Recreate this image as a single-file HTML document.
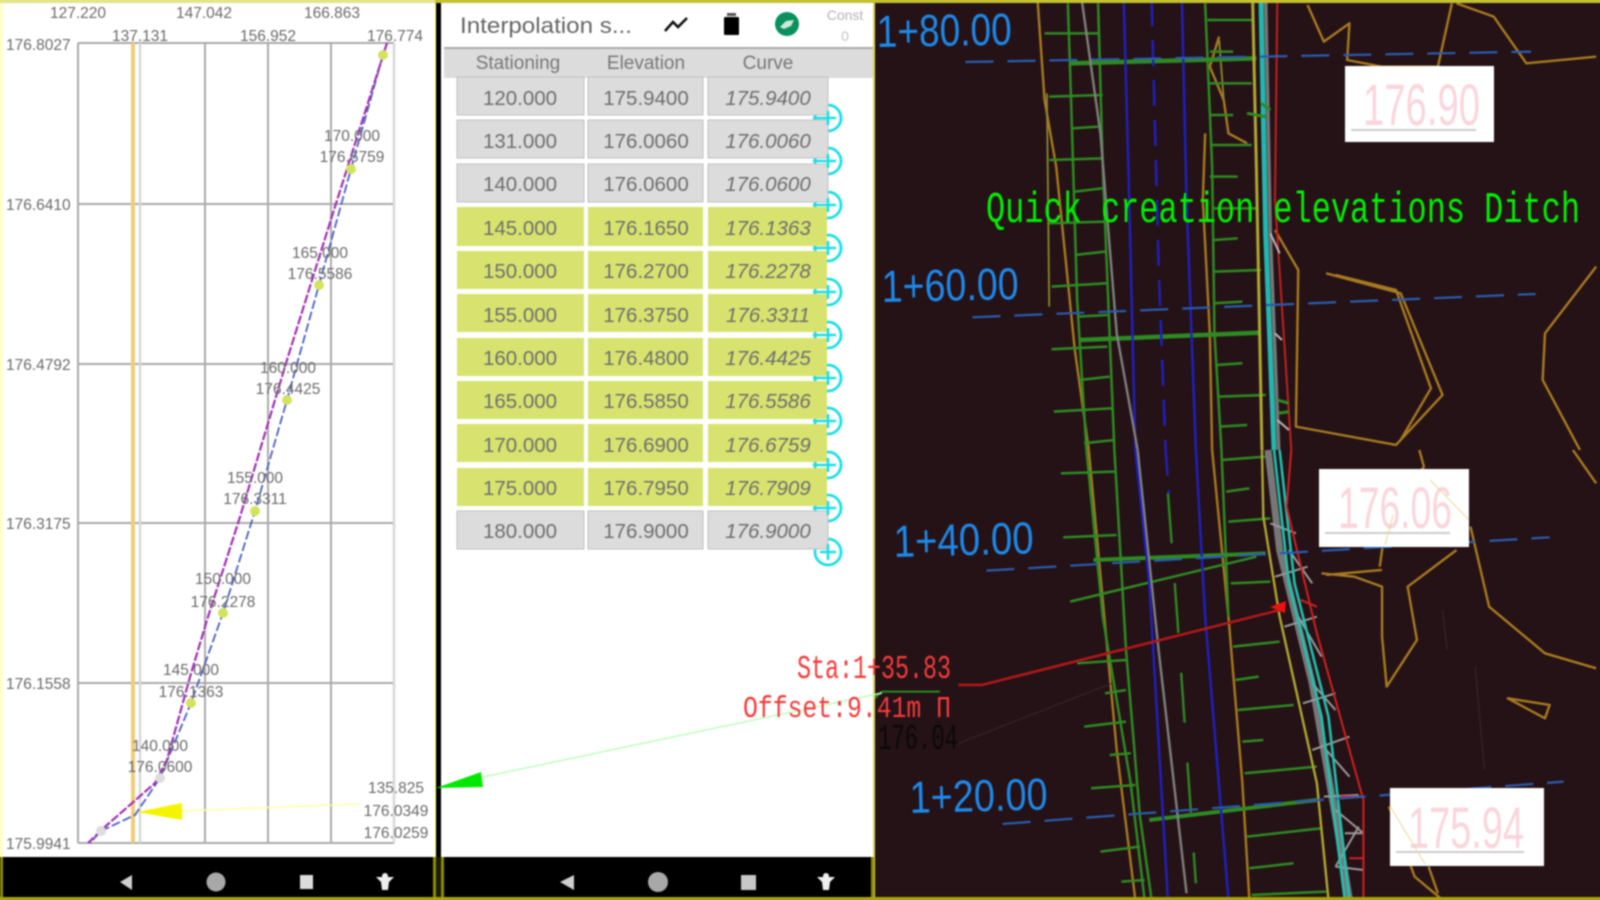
<!DOCTYPE html>
<html><head><meta charset="utf-8"><title>Interpolation</title>
<style>
html,body{margin:0;padding:0;background:#fff;width:1600px;height:900px;overflow:hidden}
svg{display:block}
text{font-family:"Liberation Sans",sans-serif}
.a text{font-size:15.5px;fill:#6a6a6a;text-anchor:middle}
.y text{font-size:15.5px;fill:#6a6a6a}
.h text{font-size:19px;fill:#777;text-anchor:middle}
.c text{font-size:20.5px;fill:#6e6e6e;text-anchor:middle}
.z *{vector-effect:non-scaling-stroke;fill:none;stroke-linejoin:round}
.st{font-size:45px;fill:#1e88e8}
.pk{font-size:58px;fill:#fad6dc}
.mono{font-family:"Liberation Mono",monospace}
</style></head><body>
<svg width="1600" height="900" viewBox="0 0 1600 900" xmlns="http://www.w3.org/2000/svg">
<g style="filter:blur(.9px)">
<rect x="-10" y="-10" width="1620" height="920" fill="#fff"/>
<!-- dark panel -->
<rect x="875" y="-10" width="735" height="920" fill="#241216"/>

<!-- CAD upper -->
<g class="z" transform="translate(870,0) scale(.4655,.3333)">
<path stroke="#a87a20" stroke-width="2.4" d="M360,0 L375,300 L400,500 L440,1050 L470,1350 M750,110 L730,200 L760,300 L770,400 L810,430 M720,400 L715,600 L730,1000 L735,1350 M940,15 L975,125 L1030,70 L1025,180 L1100,200 L1220,200 L1250,10 M1260,10 L1340,50 L1410,190 L1560,170 M870,690 L920,810 L915,1280 L1130,1335 L1230,1185 L1140,880 L980,820 M1000,825 L1130,870 L1205,1165 L1140,1320 M1560,800 L1450,1000 L1445,1140 L1525,1350"/>
<path stroke="#8a8a30" stroke-width="1.8" d="M380,280 L385,920 M750,120 L760,300"/>
<path stroke="#2e8a22" stroke-width="2.5" d="M425,10 L432,300 L445,900 L465,1350 M490,10 L500,500 L525,1350 M720,10 L735,500 L740,1000 L755,1350 M375,100 L490,100 M385,290 L500,285 M435,385 L490,380 M385,480 L500,475 M440,575 L500,565 M385,670 L505,665 M440,765 L505,755 M390,860 L510,850 M445,950 L510,945 M390,1048 L510,1040 M450,1140 L515,1130 M395,1235 L520,1225 M460,1330 L525,1320 M725,60 L820,60 M730,155 L780,155 M730,250 L820,250 M730,345 L780,345 M730,435 L820,435 M730,530 L790,530 M735,625 L830,625 M740,720 L790,715 M740,815 L840,810 M740,910 L800,905 M745,1095 L800,1090 M750,1190 L850,1185 M750,1280 L810,1275"/>
<path stroke="#2e8a22" stroke-width="4.5" d="M430,190 L830,175 M450,1020 L840,998"/>
<path stroke="#2020c0" stroke-width="2.4" d="M545,0 L555,500 L570,1350 M670,0 L680,600 L700,1350"/>
<path stroke="#2020c0" stroke-width="2.4" stroke-dasharray="26 14" d="M605,0 L620,800 L635,1350"/>
<path stroke="#808080" stroke-width="2.4" d="M455,0 L495,400 L530,1000 L575,1350"/>
<path stroke="#b0a830" stroke-width="3" d="M822,0 L830,500 L842,1350"/>
<path stroke="#777" stroke-width="3.5" d="M850,0 L860,700 L878,1350"/>
<path stroke="#20b8b0" stroke-width="5" d="M840,0 L850,700 L868,1350"/>
<path stroke="#c02020" stroke-width="2" d="M875,0 L870,600 L905,1350"/>
<path stroke="#2e8a22" stroke-width="3" d="M810,340 L850,350 M840,310 L860,330 M875,1200 L900,1210 M878,1240 L900,1235"/>
<path stroke="#b8b8b8" stroke-width="2" d="M860,700 L880,760 M870,1000 L885,1020 M875,1260 L900,1290"/>
<path stroke="#2a5cb0" stroke-width="2.2" stroke-dasharray="28 14" d="M205,186 L1420,155 M220,952 L1430,882"/>
</g>

<!-- CAD lower -->
<g class="z" transform="translate(870,450) scale(.4655,.3333)">
<path stroke="#a87a20" stroke-width="2.4" d="M470,0 L490,300 L510,600 L530,900 L570,1350 M735,0 L770,500 L800,1000 L815,1350 M970,370 L1040,380 L1100,410 L1100,560 L1110,710 L1175,570 L1155,410 L1260,300 M1100,360 L980,375 M1180,0 L1190,50 L1110,200 L1095,350 M1290,230 L1330,470 L1450,610 L1560,655 M1510,0 L1560,100 M1370,745 L1460,765 L1450,805 Z M1115,1070 L1170,1280 L1230,1350 M1200,1250 L1220,1330"/>
<path stroke="#2e8a22" stroke-width="2.5" d="M465,0 L500,500 L560,1000 L590,1350 M525,0 L550,600 L580,1100 L605,1350 M755,0 L770,500 M410,70 L525,65 M415,262 L530,255 M430,455 L830,320 M445,640 L550,630 M505,730 L550,720 M460,830 L550,815 M515,915 L560,910 M475,1015 L570,1005 M495,1205 L580,1190 M540,1295 L590,1290 M755,30 L850,20 M765,125 L815,115 M770,215 L860,205 M775,400 L860,395 M780,590 L880,575 M785,690 L835,680 M790,780 L910,765 M800,875 L845,870 M805,970 L960,950 M810,1160 L970,1135 M815,1255 L910,1240 M820,1335 L980,1325"/>
<path stroke="#2e8a22" stroke-width="4" d="M480,330 L850,310 M600,1110 L960,1050"/>
<path stroke="#2e8a22" stroke-width="2.4" stroke-dasharray="50 40" d="M640,130 L660,500 L680,900 L700,1300"/>
<path stroke="#2020c0" stroke-width="2.4" d="M570,0 L600,400 L640,1350 M700,0 L720,500 L770,1350"/>
<path stroke="#2020c0" stroke-width="2.4" stroke-dasharray="26 14" d="M635,0 L642,130"/>
<path stroke="#808080" stroke-width="2.4" d="M575,0 L620,600 L680,1330"/>
<path stroke="#777" stroke-width="7" d="M855,0 L880,300 L950,700 L1000,1100 L1030,1350"/>
<path stroke="#9a9a9a" stroke-width="2" d="M860,220 L915,250 M900,300 L950,400 M870,380 L940,350 M920,500 L970,620 M890,530 L960,500 M950,700 L1000,780 M930,760 L1000,730 M980,900 L1030,980 M950,900 L1030,860 M1000,1080 L1060,1150 M1000,1250 L1060,1260 M1020,1150 L1060,1150 M975,1040 L1050,1035 M1000,1250 L1050,1130"/>
<path stroke="#b0a830" stroke-width="2.4" d="M842,0 L845,200 L880,500 L960,1000 L985,1350"/>
<path stroke="#20c0b0" stroke-width="2.6" d="M868,0 L900,400 L970,800 L1020,1350 M880,0 L912,400 L985,800 L1030,1350"/>
<path stroke="#d02020" stroke-width="2" d="M905,0 L895,170 L960,550 L1060,1050 L1060,1350 M925,450 L960,470 M1010,1040 L1060,1040 M1030,1225 L1060,1225"/>
<path stroke="#b01818" stroke-width="2.6" d="M190,705 L240,705 L880,480"/>
<path stroke="#2a5cb0" stroke-width="2.2" stroke-dasharray="28 14" d="M250,362 L1460,262 M285,1122 L1490,995"/>
<path stroke="#2e8a22" stroke-width="2" d="M10,745 L25,725 L150,725"/>
<path stroke="#3a2a2c" stroke-width="1" d="M190,880 L520,700 M1230,480 L1240,600 M1300,650 L1320,960"/>
</g>
<polygon points="1270,607 1286,601 1285,613" fill="#ee1111"/>

<!-- white value boxes -->
<rect x="1345" y="66" width="149" height="76" fill="#fff"/>
<rect x="1319" y="469" width="150" height="78" fill="#fff"/>
<rect x="1390" y="788" width="154" height="78" fill="#fff"/>
<text class="pk" x="1363" y="125" textLength="117" lengthAdjust="spacingAndGlyphs">176.90</text>
<text class="pk" x="1338" y="528" textLength="114" lengthAdjust="spacingAndGlyphs">176.06</text>
<text class="pk" x="1408" y="848" textLength="116" lengthAdjust="spacingAndGlyphs">175.94</text>
<path d="M1351,130H1476M1325,533H1450M1396,852H1524" stroke="#cccccc" stroke-width="2"/>
<path d="M1393,515L1385,545M1430,480L1469,520M1390,806L1425,864" stroke="#e8d8a0" stroke-width="1" fill="none"/>

<!-- station labels -->
<text class="st" x="877" y="47" textLength="135" lengthAdjust="spacingAndGlyphs" transform="rotate(-1 877 47)">1+80.00</text>
<text class="st" x="882" y="302" textLength="137" lengthAdjust="spacingAndGlyphs" transform="rotate(-1.2 882 302)">1+60.00</text>
<text class="st" x="894" y="557" textLength="140" lengthAdjust="spacingAndGlyphs" transform="rotate(-1.5 894 557)">1+40.00</text>
<text class="st" x="910" y="813" textLength="138" lengthAdjust="spacingAndGlyphs" transform="rotate(-1.5 910 813)">1+20.00</text>
<text class="mono" x="986" y="222" font-size="44" fill="#00ee00" textLength="594" lengthAdjust="spacingAndGlyphs">Quick creation elevations Ditch</text>

<!-- panel frames -->
<rect x="436" y="-10" width="5" height="920" fill="#000"/>
<rect x="-10" y="-10" width="13" height="920" fill="#ffffc8"/>
<rect x="434" y="-10" width="2" height="870" fill="#ffffb0"/>
<rect x="873" y="0" width="2" height="900" fill="#d8d860"/>
<rect x="-10" y="-10" width="1620" height="13" fill="#c4c230"/>
<rect x="-10" y="-10" width="445" height="13" fill="#e4e488"/>

<!-- left chart grid -->
<path d="M78,43V843M205,43V843M268,43V843M331,43V843M78,43H394M78,204H394M78,364H394M78,523H394M78,683H394M78,843H394" stroke="#aaa" stroke-width="2" fill="none"/>
<path d="M140,43V843M394,43V843" stroke="#d8d8d8" stroke-width="2.5" fill="none"/>
<rect x="131" y="43" width="4" height="800" fill="#f0cc78"/>
<polyline fill="none" stroke="#4a60c0" stroke-width="1.8" stroke-dasharray="9 3" points="386,46 383,55 351,169 319,285 287,400 255,511 223,613 191,703 160,778 135,815 101,831 90,843"/>
<polyline fill="none" stroke="#a030b0" stroke-width="2.2" stroke-dasharray="9 2" points="387,43 333,213 287,360 260,450 240,517 207,620 190,677 167,760 155,783 107,825 88,843"/>
<g fill="#d3e35c">
<circle cx="383" cy="55" r="5"/><circle cx="351" cy="169" r="5"/><circle cx="319" cy="285" r="5"/><circle cx="287" cy="400" r="5"/><circle cx="255" cy="511" r="5"/><circle cx="223" cy="613" r="5"/><circle cx="191" cy="703" r="5"/></g>
<circle cx="160" cy="778" r="5" fill="#ddd"/><circle cx="101" cy="831" r="5" fill="#ddd"/>
<line x1="182" y1="811" x2="360" y2="804" stroke="#ffffa8" stroke-width="1.5"/>
<polygon points="137,812 182,803 182,820" fill="#f4f400"/>

<g class="a">
<text x="78" y="18">127.220</text><text x="204" y="18">147.042</text><text x="332" y="18">166.863</text>
<text x="140" y="41">137.131</text><text x="268" y="41">156.952</text><text x="395" y="41">176.774</text>
<text x="352" y="141">170.000</text><text x="352" y="162">176.6759</text>
<text x="320" y="258">165.000</text><text x="320" y="279">176.5586</text>
<text x="288" y="373">160.000</text><text x="288" y="394">176.4425</text>
<text x="255" y="483">155.000</text><text x="255" y="504">176.3311</text>
<text x="223" y="584">150.000</text><text x="223" y="607">176.2278</text>
<text x="191" y="675">145.000</text><text x="191" y="697">176.1363</text>
<text x="160" y="751">140.000</text><text x="160" y="772">176.0600</text>
<text x="396" y="793">135.825</text><text x="396" y="816">176.0349</text><text x="396" y="838">176.0259</text>
</g>
<g class="y">
<text x="6" y="50">176.8027</text><text x="6" y="210">176.6410</text><text x="6" y="370">176.4792</text><text x="6" y="529">176.3175</text><text x="6" y="689">176.1558</text><text x="6" y="849">175.9941</text>
</g>

<!-- middle panel -->
<rect x="441" y="3" width="432" height="854" fill="#fff"/>
<text x="460" y="33" font-size="22" fill="#666" textLength="172" lengthAdjust="spacingAndGlyphs">Interpolation s...</text>
<path d="M665,31L673,22L678,27L687,18" stroke="#111" stroke-width="2.6" fill="none"/>
<rect x="724" y="17" width="15" height="18" rx="1" fill="#000"/><rect x="727" y="13" width="9" height="3" fill="#555"/>
<circle cx="787" cy="24" r="12" fill="#0a8f5f"/>
<path d="M780,27L786,21L794,20L791,26L784,29Z" fill="#cfe8dc"/>
<text x="845" y="20" font-size="14" fill="#b4b4b4" text-anchor="middle">Const</text>
<text x="845" y="41" font-size="14" fill="#c4c4c4" text-anchor="middle">0</text>

<rect x="444" y="48" width="429" height="30" fill="#dcdcdc"/>
<rect x="444" y="47" width="429" height="2" fill="#aaa"/>
<g class="h"><text x="518" y="69">Stationing</text><text x="646" y="69">Elevation</text><text x="768" y="69">Curve</text></g>

<!-- plus circles -->
<g fill="none" stroke="#1cdfe6" stroke-width="2.8">
<circle cx="828" cy="118" r="13"/><circle cx="828" cy="161" r="13"/><circle cx="828" cy="205" r="13"/><circle cx="828" cy="248" r="13"/><circle cx="828" cy="292" r="13"/><circle cx="828" cy="335" r="13"/><circle cx="828" cy="378" r="13"/><circle cx="828" cy="421" r="13"/><circle cx="828" cy="465" r="13"/><circle cx="828" cy="508" r="13"/><circle cx="828" cy="552" r="13"/>
</g>

<!-- cells -->
<g fill="#dcdcdc" stroke="#c0c0c0" stroke-width="1">
<rect x="457" y="77" width="127" height="38"/><rect x="588" y="77" width="115" height="38"/><rect x="708" y="77" width="120" height="38"/>
<rect x="457" y="120" width="127" height="38"/><rect x="588" y="120" width="115" height="38"/><rect x="708" y="120" width="120" height="38"/>
<rect x="457" y="164" width="127" height="38"/><rect x="588" y="164" width="115" height="38"/><rect x="708" y="164" width="120" height="38"/>
<rect x="457" y="511" width="127" height="38"/><rect x="588" y="511" width="115" height="38"/><rect x="708" y="511" width="120" height="38"/>
</g>
<g fill="#d7e36e">
<rect x="457" y="207" width="127" height="39"/><rect x="588" y="207" width="115" height="39"/><rect x="708" y="207" width="119" height="39"/>
<rect x="457" y="251" width="127" height="38"/><rect x="588" y="251" width="115" height="38"/><rect x="708" y="251" width="119" height="38"/>
<rect x="457" y="294" width="127" height="38"/><rect x="588" y="294" width="115" height="38"/><rect x="708" y="294" width="119" height="38"/>
<rect x="457" y="338" width="127" height="38"/><rect x="588" y="338" width="115" height="38"/><rect x="708" y="338" width="119" height="38"/>
<rect x="457" y="381" width="127" height="38"/><rect x="588" y="381" width="115" height="38"/><rect x="708" y="381" width="119" height="38"/>
<rect x="457" y="424" width="127" height="38"/><rect x="588" y="424" width="115" height="38"/><rect x="708" y="424" width="119" height="38"/>
<rect x="457" y="468" width="127" height="38"/><rect x="588" y="468" width="115" height="38"/><rect x="708" y="468" width="119" height="38"/>
</g>
<!-- plus marks on top -->
<g stroke="#1cdfe6" stroke-width="2.6" fill="none">
<path d="M813,118H836M828,111V125M813,161H836M828,154V168M813,205H836M828,198V212M813,248H836M828,241V255M813,292H836M828,285V299M813,335H836M828,328V342M813,378H836M828,371V385M813,421H836M828,414V428M813,465H836M828,458V472M813,508H836M828,501V515M820,552H836M828,544V560"/>
</g>
<g class="c">
<text x="520" y="105">120.000</text><text x="646" y="105">175.9400</text><text x="768" y="105" font-style="italic">175.9400</text>
<text x="520" y="148">131.000</text><text x="646" y="148">176.0060</text><text x="768" y="148" font-style="italic">176.0060</text>
<text x="520" y="191">140.000</text><text x="646" y="191">176.0600</text><text x="768" y="191" font-style="italic">176.0600</text>
<text x="520" y="235">145.000</text><text x="646" y="235">176.1650</text><text x="768" y="235" font-style="italic">176.1363</text>
<text x="520" y="278">150.000</text><text x="646" y="278">176.2700</text><text x="768" y="278" font-style="italic">176.2278</text>
<text x="520" y="322">155.000</text><text x="646" y="322">176.3750</text><text x="768" y="322" font-style="italic">176.3311</text>
<text x="520" y="365">160.000</text><text x="646" y="365">176.4800</text><text x="768" y="365" font-style="italic">176.4425</text>
<text x="520" y="408">165.000</text><text x="646" y="408">176.5850</text><text x="768" y="408" font-style="italic">176.5586</text>
<text x="520" y="452">170.000</text><text x="646" y="452">176.6900</text><text x="768" y="452" font-style="italic">176.6759</text>
<text x="520" y="495">175.000</text><text x="646" y="495">176.7950</text><text x="768" y="495" font-style="italic">176.7909</text>
<text x="520" y="538">180.000</text><text x="646" y="538">176.9000</text><text x="768" y="538" font-style="italic">176.9000</text>
</g>

<!-- green leader arrow -->
<line x1="483" y1="777" x2="882" y2="693" stroke="#bcffbc" stroke-width="1.5"/>
<polygon points="436,788 481,772 483,787" fill="#00e800"/>

<!-- overlay CAD text across panels -->
<text class="mono" x="797" y="678" font-size="33" fill="#f53a3a" textLength="154" lengthAdjust="spacingAndGlyphs">Sta:1+35.83</text>
<text class="mono" x="743" y="717" font-size="31" fill="#f53a3a" textLength="208" lengthAdjust="spacingAndGlyphs">Offset:9.41m П</text>
<text class="mono" x="878" y="749" font-size="36" fill="#0c0808" textLength="80" lengthAdjust="spacingAndGlyphs">176.04</text>

<!-- nav bars -->
<rect x="-10" y="857" width="445" height="50" fill="#000"/>
<rect x="444" y="857" width="429" height="50" fill="#000"/>
<rect x="436" y="857" width="8" height="50" fill="#1a1a00"/>
<rect x="433" y="857" width="3" height="43" fill="#8c8c00"/>
<rect x="441" y="857" width="3" height="43" fill="#8c8c00"/>
<rect x="871" y="857" width="3" height="43" fill="#8c8c00"/>
<rect x="0" y="857" width="3" height="43" fill="#8c8c00"/>
<rect x="-10" y="897" width="1620" height="13" fill="#a8a400"/>
<g fill="#cfcfcf">
<polygon points="120,882 132,875 132,890"/><circle cx="216" cy="882" r="9.5" fill="#a8a8a8"/><rect x="300" y="875" width="13" height="14" fill="#dcdcdc"/>
<g transform="translate(385,882)"><circle cy="-6" r="3" fill="#eee"/><path d="M-9,-5L9,-5L4,0L3,8L-3,8L-4,0Z" fill="#eee"/></g>
<polygon points="560,882 574,875 574,890"/><circle cx="658" cy="882" r="10" fill="#a8a8a8"/><rect x="741" y="875" width="15" height="15" fill="#c8c8c8"/>
<g transform="translate(826,882)"><circle cy="-6" r="3" fill="#eee"/><path d="M-9,-5L9,-5L4,0L3,8L-3,8L-4,0Z" fill="#eee"/></g>
</g>
</g>
</svg>
</body></html>
